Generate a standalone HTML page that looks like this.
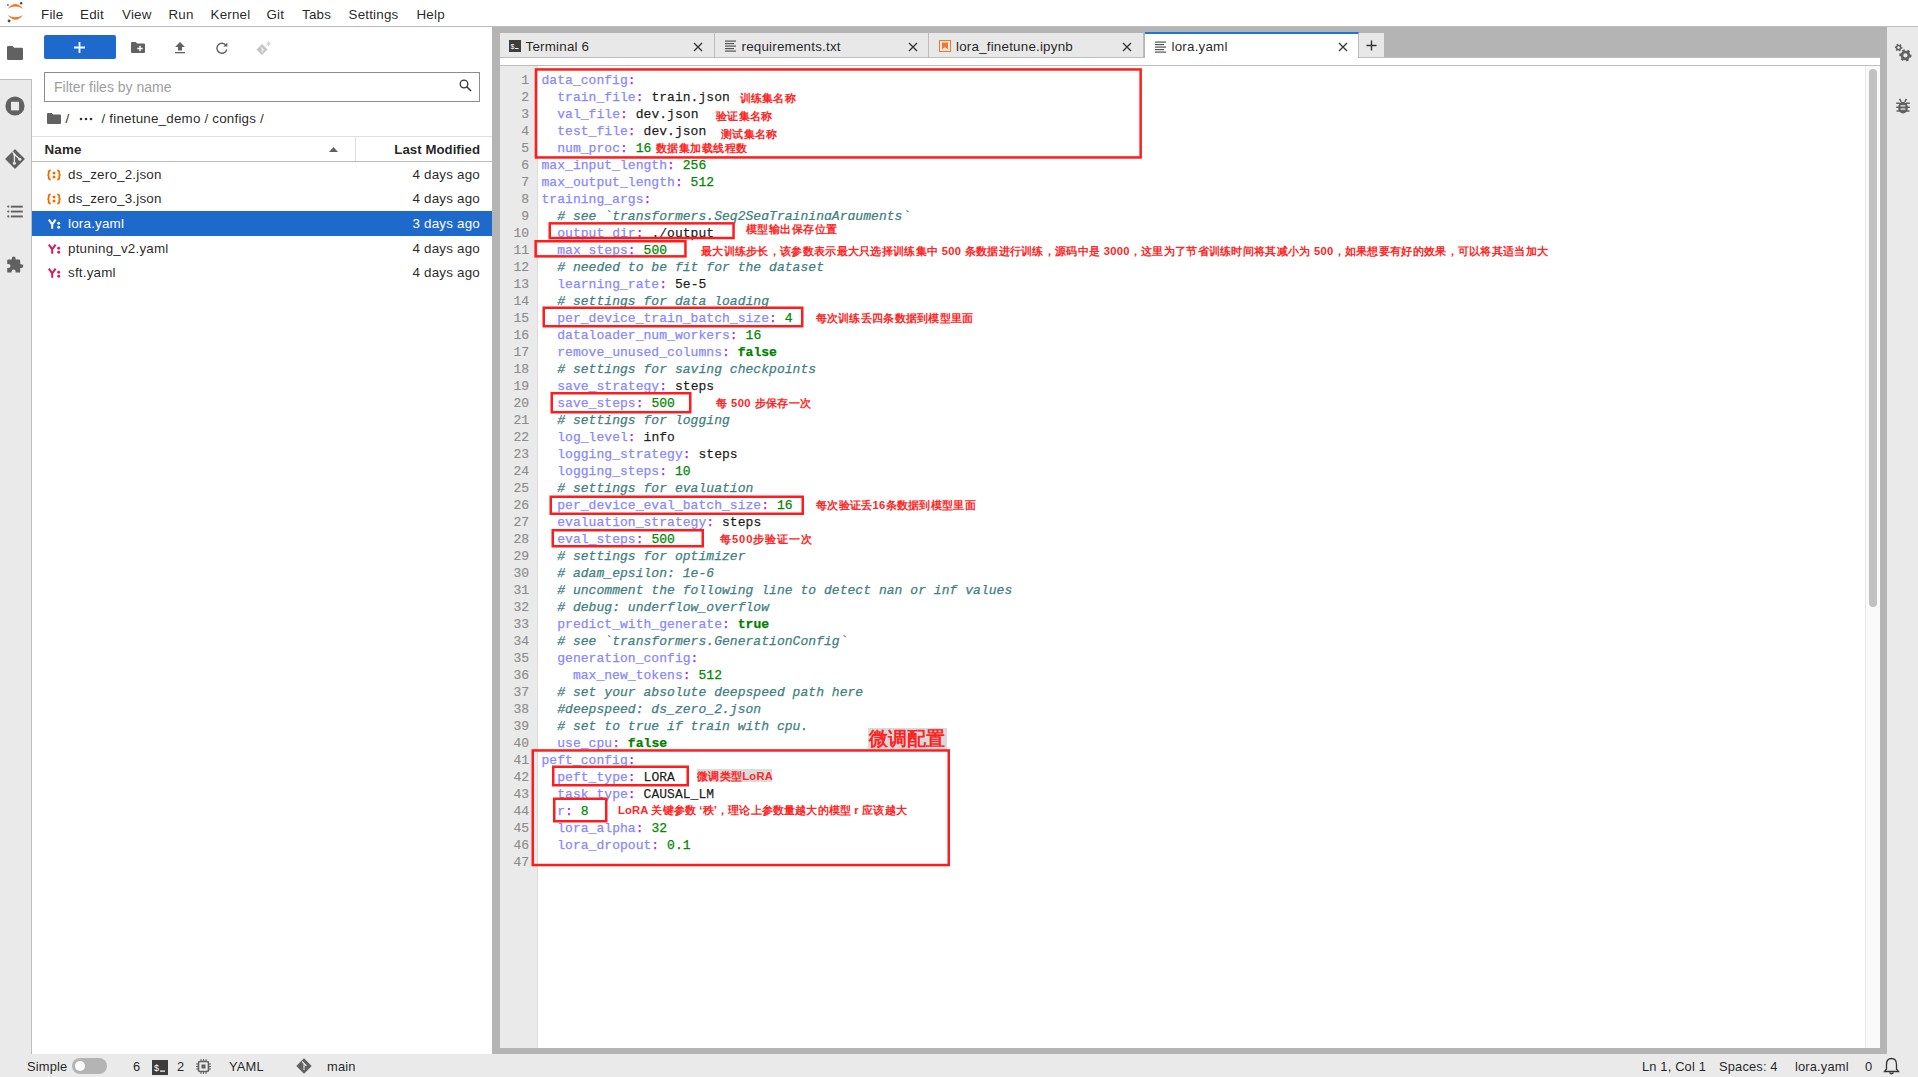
<!DOCTYPE html>
<html><head><meta charset="utf-8">
<style>
*{box-sizing:border-box}
html,body{margin:0;padding:0}
body{width:1918px;height:1077px;position:relative;overflow:hidden;background:#fff;font-family:"Liberation Sans",sans-serif;color:rgba(0,0,0,.87)}
.a{position:absolute}
.menu{position:absolute;top:5.5px;font-size:13.4px;letter-spacing:0.2px;line-height:18px;color:rgba(0,0,0,.87)}
.fr{position:absolute;left:32px;width:460px;height:24.6px}
.fr .nm{position:absolute;left:36px;top:1px;font-size:13.4px;letter-spacing:0.2px;line-height:24.6px;color:rgba(0,0,0,.87)}
.fr .dt{position:absolute;right:12px;top:1px;font-size:13.4px;letter-spacing:0.2px;line-height:24.6px;color:rgba(0,0,0,.87)}
.fr svg{position:absolute;left:15px;top:6px}
.tab{position:absolute;top:33px;height:24.5px;width:214.5px;background:#e8e8e8;border-right:1px solid #bdbdbd}
.tab .t{position:absolute;left:25.5px;top:2px;line-height:24.5px;font-size:13.4px;letter-spacing:0.2px;color:rgba(0,0,0,.87)}
.tab .x{position:absolute;left:193px;top:8.5px}
.ln{position:absolute;left:500px;width:29px;text-align:right;font-family:"Liberation Mono",monospace;font-size:13px;line-height:17px;color:#8c8c8c;height:17px;-webkit-text-stroke:0.15px}
.cl{position:absolute;left:541.5px;font-family:"Liberation Mono",monospace;font-size:13px;line-height:17px;white-space:pre;color:rgba(0,0,0,.87);height:17px;letter-spacing:0.045px;-webkit-text-stroke:0.25px}
.k{color:#88f} .o{color:#a2f} .n{color:#080} .b{color:#008000;font-weight:bold} .c{color:#408080;font-style:italic} .v{color:rgba(0,0,0,.87)}
.bx{position:absolute;border:2px solid #ff1c1c}
.lb{position:absolute;font-size:11.2px;letter-spacing:0.3px;line-height:16px;color:#ff2626;white-space:pre;font-weight:bold}
.st{position:absolute;top:1055px;font-size:12.9px;letter-spacing:0.15px;line-height:23px;color:rgba(0,0,0,.87)}
</style></head><body>

<!-- menubar -->
<div class="a" style="left:0;top:0;width:1918px;height:27px;background:#fff;border-bottom:1px solid #bdbdbd"></div>
<svg class="a" style="left:0;top:0" width="30" height="26" viewBox="0 0 30 26">
 <path d="M7.8 8.7 Q15.4 -0.6 23 8.7 Q15.4 4.3 7.8 8.7Z" fill="#f37726"/>
 <path d="M7.8 15 Q15.4 24.6 23 15 Q15.4 19.4 7.8 15Z" fill="#f37726"/>
 <circle cx="21.1" cy="3.3" r="1.25" fill="#4e4e4e"/>
 <circle cx="7.9" cy="5" r="0.95" fill="#767676"/>
 <circle cx="9.1" cy="21" r="1.45" fill="#4e4e4e"/>
</svg>
<div class="menu" style="left:41px">File</div>
<div class="menu" style="left:80px">Edit</div>
<div class="menu" style="left:122px">View</div>
<div class="menu" style="left:168.5px">Run</div>
<div class="menu" style="left:210.5px">Kernel</div>
<div class="menu" style="left:266.5px">Git</div>
<div class="menu" style="left:302px">Tabs</div>
<div class="menu" style="left:348.5px">Settings</div>
<div class="menu" style="left:416.5px">Help</div>

<!-- left sidebar -->
<div class="a" style="left:0;top:27px;width:32px;height:1027px;background:#eaeaea;border-right:1px solid #bdbdbd"></div>
<div class="a" style="left:0;top:27px;width:32px;height:52.5px;background:#fff"></div>
<div class="a" style="left:31px;top:79px;width:1px;height:1px;background:#bdbdbd"></div>
<div class="a" style="left:0;top:79px;width:32px;height:1px;background:#bdbdbd"></div>
<!-- folder icon -->
<svg class="a" style="left:7px;top:46px" width="16" height="14" viewBox="0 0 16 14"><path d="M0 1.2 Q0 0 1.2 0 H5.5 L7.2 1.8 H14.8 Q16 1.8 16 3 V12.8 Q16 14 14.8 14 H1.2 Q0 14 0 12.8Z" fill="#616161"/></svg>
<!-- stop circle -->
<svg class="a" style="left:5px;top:96px" width="20" height="20" viewBox="0 0 20 20"><circle cx="10" cy="10" r="9.6" fill="#616161"/><rect x="6" y="5.8" width="8" height="8.6" fill="#eaeaea"/></svg>
<!-- git diamond -->
<svg class="a" style="left:5px;top:149px" width="20" height="20" viewBox="0 0 20 20"><path d="M10 1 L19 10 L10 19 L1 10Z" fill="#616161" stroke="#616161" stroke-width="1.4" stroke-linejoin="round"/><path d="M7.6 2.6 L9.4 5.4 V14 M9.4 5.4 L14.6 10" stroke="#eaeaea" stroke-width="1.3" fill="none"/><circle cx="9.4" cy="14.3" r="1.5" fill="#eaeaea"/><circle cx="14.8" cy="10.2" r="1.5" fill="#eaeaea"/><circle cx="9.4" cy="5.6" r="1.2" fill="#eaeaea"/></svg>
<!-- list icon -->
<svg class="a" style="left:7px;top:205px" width="16" height="14" viewBox="0 0 16 14"><g fill="#616161"><circle cx="1.3" cy="1.6" r="1.1"/><circle cx="1.3" cy="6.5" r="1.1"/><circle cx="1.3" cy="11.4" r="1.1"/><rect x="3.8" y="0.7" width="12" height="1.9"/><rect x="3.8" y="5.6" width="12" height="1.9"/><rect x="3.8" y="10.5" width="12" height="1.9"/></g></svg>
<!-- puzzle -->
<svg class="a" style="left:6px;top:256px" width="18" height="18" viewBox="0 0 18 18"><path d="M15.4 8.2 H14.2 V4.8 Q14.2 3.6 13 3.6 H9.6 V2.4 Q9.6 0.5 7.7 0.5 Q5.8 0.5 5.8 2.4 V3.6 H2.4 Q1.2 3.6 1.2 4.8 V8 H2.4 Q4.5 8 4.5 10 Q4.5 12 2.4 12 H1.2 V15.4 Q1.2 16.6 2.4 16.6 H5.6 V15.4 Q5.6 13.4 7.6 13.4 Q9.6 13.4 9.6 15.4 V16.6 H13 Q14.2 16.6 14.2 15.4 V12 H15.4 Q17.3 12 17.3 10.1 Q17.3 8.2 15.4 8.2Z" fill="#616161"/></svg>

<!-- file browser -->
<div class="a" style="left:44px;top:35px;width:72px;height:24px;background:#1e69cc;border-radius:2px"></div>
<svg class="a" style="left:73px;top:40.5px" width="13" height="13" viewBox="0 0 13 13"><path d="M6.5 1 V12 M1 6.5 H12" stroke="#fff" stroke-width="1.8"/></svg>
<!-- new folder -->
<svg class="a" style="left:131px;top:42px" width="14" height="11" viewBox="0 0 14 11"><path d="M0 1 Q0 0 1 0 H4.8 L6.2 1.4 H13 Q14 1.4 14 2.4 V10 Q14 11 13 11 H1 Q0 11 0 10Z" fill="#616161"/><path d="M9 3.8 V9.2 M6.3 6.5 H11.7" stroke="#fff" stroke-width="1.4"/></svg>
<!-- upload -->
<svg class="a" style="left:175px;top:42px" width="10" height="12" viewBox="0 0 10 12"><path d="M5 0 L10 5 H7 V8.5 H3 V5 H0Z" fill="#616161"/><rect x="0" y="10" width="10" height="1.3" fill="#616161"/></svg>
<!-- refresh -->
<svg class="a" style="left:216px;top:42px" width="12" height="12" viewBox="0 0 12 12"><path d="M10 3.3 A5 5 0 1 0 10.8 7.5" stroke="#616161" stroke-width="1.4" fill="none"/><path d="M11.4 0.6 V4.6 H7.4Z" fill="#616161"/></svg>
<!-- git clone -->
<svg class="a" style="left:255px;top:40px" width="17" height="17" viewBox="0 0 17 17"><path d="M7 4 L12.5 9.5 L7 15 L1.5 9.5Z" fill="#c4c4c4"/><path d="M5.6 7 L7.2 8.6 V12.5 M7.2 8.6 L9 10.4" stroke="#fff" stroke-width="0.9" fill="none"/><path d="M13.5 1.5 V6 M11.3 3.8 H15.7 M12 2.3 L15 5.3 M15 2.3 L12 5.3" stroke="#d0d0d0" stroke-width="0.9"/></svg>
<!-- filter -->
<div class="a" style="left:44px;top:72px;width:436px;height:29.5px;border:1px solid #8c8c8c;background:#fff"></div>
<div class="a" style="left:54px;top:78px;font-size:14px;line-height:18px;color:#9e9e9e">Filter files by name</div>
<svg class="a" style="left:459px;top:79px" width="13" height="13" viewBox="0 0 13 13"><circle cx="5" cy="5" r="3.8" stroke="#333" stroke-width="1.3" fill="none"/><path d="M7.8 7.8 L12 12" stroke="#333" stroke-width="1.5"/></svg>
<!-- breadcrumbs -->
<svg class="a" style="left:47px;top:113px" width="14" height="11" viewBox="0 0 14 11"><path d="M0 1 Q0 0 1 0 H4.8 L6.2 1.4 H13 Q14 1.4 14 2.4 V10 Q14 11 13 11 H1 Q0 11 0 10Z" fill="#616161"/></svg>
<div class="a" style="left:65.5px;top:110px;font-size:13.4px;letter-spacing:0.2px;line-height:17px;color:rgba(0,0,0,.87);white-space:pre">/ </div>
<svg class="a" style="left:79px;top:117px" width="14" height="4" viewBox="0 0 14 4"><circle cx="2" cy="2" r="1.3" fill="#333"/><circle cx="7" cy="2" r="1.3" fill="#333"/><circle cx="12" cy="2" r="1.3" fill="#333"/></svg>
<div class="a" style="left:101.5px;top:110px;font-size:13.4px;letter-spacing:0.2px;line-height:17px;color:rgba(0,0,0,.87);white-space:pre">/ finetune_demo / configs / </div>
<!-- listing header -->
<div class="a" style="left:32px;top:136px;width:460px;height:1px;background:#e0e0e0"></div>
<div class="a" style="left:32px;top:161px;width:460px;height:1px;background:#bdbdbd"></div>
<div class="a" style="left:355px;top:137px;width:1px;height:24px;background:#e0e0e0"></div>
<div class="a" style="left:44.5px;top:141px;font-size:13.4px;letter-spacing:0.2px;line-height:17px;font-weight:bold;color:rgba(0,0,0,.87)">Name</div>
<svg class="a" style="left:329px;top:146.5px" width="9" height="5" viewBox="0 0 9 5"><path d="M0 5 L4.5 0 L9 5Z" fill="#616161"/></svg>
<div class="a" style="left:300px;width:180px;text-align:right;top:141px;font-size:13.2px;letter-spacing:0.05px;line-height:17px;font-weight:bold;color:rgba(0,0,0,.87)">Last Modified</div>

<div class="fr" style="top:161.5px;"><svg width="20" height="20" viewBox="0 0 20 20" style="left:12px;top:3px"><path d="M6.8 5.3 Q4.7 5.3 4.7 7.4 V8.9 Q4.7 9.9 3.4 9.9 Q4.7 9.9 4.7 10.9 V12.6 Q4.7 14.7 6.8 14.7 M13.2 5.3 Q15.3 5.3 15.3 7.4 V8.9 Q15.3 9.9 16.6 9.9 Q15.3 9.9 15.3 10.9 V12.6 Q15.3 14.7 13.2 14.7" stroke="#ef6c00" stroke-width="1.8" fill="none"/><circle cx="10" cy="8.1" r="1.5" fill="#ef6c00"/><circle cx="10" cy="12.1" r="1.5" fill="#ef6c00"/></svg><div class="nm" style="">ds_zero_2.json</div><div class="dt" style="">4 days ago</div></div>
<div class="fr" style="top:186.2px;"><svg width="20" height="20" viewBox="0 0 20 20" style="left:12px;top:3px"><path d="M6.8 5.3 Q4.7 5.3 4.7 7.4 V8.9 Q4.7 9.9 3.4 9.9 Q4.7 9.9 4.7 10.9 V12.6 Q4.7 14.7 6.8 14.7 M13.2 5.3 Q15.3 5.3 15.3 7.4 V8.9 Q15.3 9.9 16.6 9.9 Q15.3 9.9 15.3 10.9 V12.6 Q15.3 14.7 13.2 14.7" stroke="#ef6c00" stroke-width="1.8" fill="none"/><circle cx="10" cy="8.1" r="1.5" fill="#ef6c00"/><circle cx="10" cy="12.1" r="1.5" fill="#ef6c00"/></svg><div class="nm" style="">ds_zero_3.json</div><div class="dt" style="">4 days ago</div></div>
<div class="fr" style="top:211px;background:#1e69cc;"><svg width="20" height="20" viewBox="0 0 20 20" style="left:12px;top:3px"><path d="M4.8 5.6 L8.2 10.4 L11.6 5.6 M8.2 10.4 V14.8" stroke="#fff" stroke-width="2" fill="none" stroke-linejoin="round"/><circle cx="14.7" cy="9.3" r="1.45" fill="#fff"/><circle cx="14.7" cy="13.2" r="1.45" fill="#fff"/></svg><div class="nm" style="color:#fff;">lora.yaml</div><div class="dt" style="color:#fff;">3 days ago</div></div>
<div class="fr" style="top:235.7px;"><svg width="20" height="20" viewBox="0 0 20 20" style="left:12px;top:3px"><path d="M4.8 5.6 L8.2 10.4 L11.6 5.6 M8.2 10.4 V14.8" stroke="#d81b60" stroke-width="2" fill="none" stroke-linejoin="round"/><circle cx="14.7" cy="9.3" r="1.45" fill="#d81b60"/><circle cx="14.7" cy="13.2" r="1.45" fill="#d81b60"/></svg><div class="nm" style="">ptuning_v2.yaml</div><div class="dt" style="">4 days ago</div></div>
<div class="fr" style="top:260.4px;"><svg width="20" height="20" viewBox="0 0 20 20" style="left:12px;top:3px"><path d="M4.8 5.6 L8.2 10.4 L11.6 5.6 M8.2 10.4 V14.8" stroke="#d81b60" stroke-width="2" fill="none" stroke-linejoin="round"/><circle cx="14.7" cy="9.3" r="1.45" fill="#d81b60"/><circle cx="14.7" cy="13.2" r="1.45" fill="#d81b60"/></svg><div class="nm" style="">sft.yaml</div><div class="dt" style="">4 days ago</div></div>


<!-- main grey area -->
<div class="a" style="left:492px;top:27px;width:1395px;height:1027px;background:#b4b4b4"></div>
<!-- right sidebar -->
<div class="a" style="left:1887px;top:27px;width:31px;height:1027px;background:#eaeaea"></div>

<!-- tabs -->
<div class="tab" style="left:500px"><svg class="a" style="left:9px;top:7px" width="12" height="12" viewBox="0 0 12 12"><rect width="12" height="12" fill="#3d3d3d"/><text x="1.5" y="8.5" font-size="7" fill="#fff" font-family="Liberation Sans">$</text><rect x="6" y="8" width="3.5" height="1" fill="#fff"/></svg><div class="t">Terminal 6</div><svg class="x" width="10" height="10" viewBox="0 0 10 10"><path d="M1 1 L9 9 M9 1 L1 9" stroke="#333" stroke-width="1.3"/></svg></div>
<div class="tab" style="left:714.5px"><svg class="a" style="left:10px;top:7px" width="12" height="12" viewBox="0 0 12 12"><g fill="#555"><rect x="0" y="0.5" width="11" height="1.2"/><rect x="0" y="3" width="9" height="1.2"/><rect x="0" y="5.5" width="11" height="1.2"/><rect x="0" y="8" width="9" height="1.2"/><rect x="0" y="10.5" width="11" height="1.2"/></g></svg><div class="t" style="left:27px">requirements.txt</div><svg class="x" width="10" height="10" viewBox="0 0 10 10"><path d="M1 1 L9 9 M9 1 L1 9" stroke="#333" stroke-width="1.3"/></svg></div>
<div class="tab" style="left:929px"><svg class="a" style="left:9.5px;top:6.5px" width="12" height="12" viewBox="0 0 12 12"><rect x="0.5" y="0.5" width="11" height="11" fill="none" stroke="#f37726" stroke-width="1"/><path d="M3 2.5 H9 V9.5 L6 7 L3 9.5Z" fill="#f37726"/></svg><div class="t" style="left:27px">lora_finetune.ipynb</div><svg class="x" width="10" height="10" viewBox="0 0 10 10"><path d="M1 1 L9 9 M9 1 L1 9" stroke="#333" stroke-width="1.3"/></svg></div>
<div class="tab" style="left:1144.5px;background:#fff;top:32px;height:26px;border-top:2px solid #1976d2"><svg class="a" style="left:10px;top:7px" width="12" height="12" viewBox="0 0 12 12"><g fill="#555"><rect x="0" y="0.5" width="11" height="1.2"/><rect x="0" y="3" width="9" height="1.2"/><rect x="0" y="5.5" width="11" height="1.2"/><rect x="0" y="8" width="9" height="1.2"/><rect x="0" y="10.5" width="11" height="1.2"/></g></svg><div class="t" style="left:27px;top:1px;line-height:24px">lora.yaml</div><svg class="x" style="top:7.5px" width="10" height="10" viewBox="0 0 10 10"><path d="M1 1 L9 9 M9 1 L1 9" stroke="#333" stroke-width="1.3"/></svg></div>
<div class="a" style="left:1359px;top:33px;width:25px;height:24.5px;background:#e8e8e8"></div>
<svg class="a" style="left:1366px;top:40px" width="11" height="11" viewBox="0 0 11 11"><path d="M5.5 0.5 V10.5 M0.5 5.5 H10.5" stroke="#333" stroke-width="1.4"/></svg>
<div class="a" style="left:500px;top:57px;width:644.5px;height:1px;background:#bdbdbd"></div>
<div class="a" style="left:1359px;top:57px;width:521px;height:1px;background:#bdbdbd"></div>

<!-- editor -->
<div class="a" style="left:500px;top:58px;width:1380px;height:989.5px;background:#fff"></div>
<div class="a" style="left:500px;top:65px;width:1380px;height:1px;background:#bdbdbd"></div>
<div class="a" style="left:500px;top:66px;width:38px;height:981.5px;background:#eaeaea;border-right:1px solid #dcdcdc"></div>
<div class="a" style="left:1865px;top:66px;width:15px;height:981.5px;background:#fafafa;border-left:1px solid #e8e8e8"></div>
<div class="a" style="left:1869px;top:69px;width:8px;height:538px;background:#c1c1c1;border-radius:4px"></div>

<div class="ln" style="top:72px">1</div><div class="cl" style="top:72px"><span class="k">data_config</span><span class="o">:</span></div>
<div class="ln" style="top:89px">2</div><div class="cl" style="top:89px">  <span class="k">train_file</span><span class="o">:</span> <span class="v">train.json</span></div>
<div class="ln" style="top:106px">3</div><div class="cl" style="top:106px">  <span class="k">val_file</span><span class="o">:</span> <span class="v">dev.json</span></div>
<div class="ln" style="top:123px">4</div><div class="cl" style="top:123px">  <span class="k">test_file</span><span class="o">:</span> <span class="v">dev.json</span></div>
<div class="ln" style="top:140px">5</div><div class="cl" style="top:140px">  <span class="k">num_proc</span><span class="o">:</span> <span class="n">16</span></div>
<div class="ln" style="top:157px">6</div><div class="cl" style="top:157px"><span class="k">max_input_length</span><span class="o">:</span> <span class="n">256</span></div>
<div class="ln" style="top:174px">7</div><div class="cl" style="top:174px"><span class="k">max_output_length</span><span class="o">:</span> <span class="n">512</span></div>
<div class="ln" style="top:191px">8</div><div class="cl" style="top:191px"><span class="k">training_args</span><span class="o">:</span></div>
<div class="ln" style="top:208px">9</div><div class="cl" style="top:208px">  <i class="c"># see `transformers.Seq2SeqTrainingArguments`</i></div>
<div class="ln" style="top:225px">10</div><div class="cl" style="top:225px">  <span class="k">output_dir</span><span class="o">:</span> <span class="v">./output</span></div>
<div class="ln" style="top:242px">11</div><div class="cl" style="top:242px">  <span class="k">max_steps</span><span class="o">:</span> <span class="n">500</span></div>
<div class="ln" style="top:259px">12</div><div class="cl" style="top:259px">  <i class="c"># needed to be fit for the dataset</i></div>
<div class="ln" style="top:276px">13</div><div class="cl" style="top:276px">  <span class="k">learning_rate</span><span class="o">:</span> <span class="v">5e-5</span></div>
<div class="ln" style="top:293px">14</div><div class="cl" style="top:293px">  <i class="c"># settings for data loading</i></div>
<div class="ln" style="top:310px">15</div><div class="cl" style="top:310px">  <span class="k">per_device_train_batch_size</span><span class="o">:</span> <span class="n">4</span></div>
<div class="ln" style="top:327px">16</div><div class="cl" style="top:327px">  <span class="k">dataloader_num_workers</span><span class="o">:</span> <span class="n">16</span></div>
<div class="ln" style="top:344px">17</div><div class="cl" style="top:344px">  <span class="k">remove_unused_columns</span><span class="o">:</span> <b class="b">false</b></div>
<div class="ln" style="top:361px">18</div><div class="cl" style="top:361px">  <i class="c"># settings for saving checkpoints</i></div>
<div class="ln" style="top:378px">19</div><div class="cl" style="top:378px">  <span class="k">save_strategy</span><span class="o">:</span> <span class="v">steps</span></div>
<div class="ln" style="top:395px">20</div><div class="cl" style="top:395px">  <span class="k">save_steps</span><span class="o">:</span> <span class="n">500</span></div>
<div class="ln" style="top:412px">21</div><div class="cl" style="top:412px">  <i class="c"># settings for logging</i></div>
<div class="ln" style="top:429px">22</div><div class="cl" style="top:429px">  <span class="k">log_level</span><span class="o">:</span> <span class="v">info</span></div>
<div class="ln" style="top:446px">23</div><div class="cl" style="top:446px">  <span class="k">logging_strategy</span><span class="o">:</span> <span class="v">steps</span></div>
<div class="ln" style="top:463px">24</div><div class="cl" style="top:463px">  <span class="k">logging_steps</span><span class="o">:</span> <span class="n">10</span></div>
<div class="ln" style="top:480px">25</div><div class="cl" style="top:480px">  <i class="c"># settings for evaluation</i></div>
<div class="ln" style="top:497px">26</div><div class="cl" style="top:497px">  <span class="k">per_device_eval_batch_size</span><span class="o">:</span> <span class="n">16</span></div>
<div class="ln" style="top:514px">27</div><div class="cl" style="top:514px">  <span class="k">evaluation_strategy</span><span class="o">:</span> <span class="v">steps</span></div>
<div class="ln" style="top:531px">28</div><div class="cl" style="top:531px">  <span class="k">eval_steps</span><span class="o">:</span> <span class="n">500</span></div>
<div class="ln" style="top:548px">29</div><div class="cl" style="top:548px">  <i class="c"># settings for optimizer</i></div>
<div class="ln" style="top:565px">30</div><div class="cl" style="top:565px">  <i class="c"># adam_epsilon: 1e-6</i></div>
<div class="ln" style="top:582px">31</div><div class="cl" style="top:582px">  <i class="c"># uncomment the following line to detect nan or inf values</i></div>
<div class="ln" style="top:599px">32</div><div class="cl" style="top:599px">  <i class="c"># debug: underflow_overflow</i></div>
<div class="ln" style="top:616px">33</div><div class="cl" style="top:616px">  <span class="k">predict_with_generate</span><span class="o">:</span> <b class="b">true</b></div>
<div class="ln" style="top:633px">34</div><div class="cl" style="top:633px">  <i class="c"># see `transformers.GenerationConfig`</i></div>
<div class="ln" style="top:650px">35</div><div class="cl" style="top:650px">  <span class="k">generation_config</span><span class="o">:</span></div>
<div class="ln" style="top:667px">36</div><div class="cl" style="top:667px">    <span class="k">max_new_tokens</span><span class="o">:</span> <span class="n">512</span></div>
<div class="ln" style="top:684px">37</div><div class="cl" style="top:684px">  <i class="c"># set your absolute deepspeed path here</i></div>
<div class="ln" style="top:701px">38</div><div class="cl" style="top:701px">  <i class="c">#deepspeed: ds_zero_2.json</i></div>
<div class="ln" style="top:718px">39</div><div class="cl" style="top:718px">  <i class="c"># set to true if train with cpu.</i></div>
<div class="ln" style="top:735px">40</div><div class="cl" style="top:735px">  <span class="k">use_cpu</span><span class="o">:</span> <b class="b">false</b></div>
<div class="ln" style="top:752px">41</div><div class="cl" style="top:752px"><span class="k">peft_config</span><span class="o">:</span></div>
<div class="ln" style="top:769px">42</div><div class="cl" style="top:769px">  <span class="k">peft_type</span><span class="o">:</span> <span class="v">LORA</span></div>
<div class="ln" style="top:786px">43</div><div class="cl" style="top:786px">  <span class="k">task_type</span><span class="o">:</span> <span class="v">CAUSAL_LM</span></div>
<div class="ln" style="top:803px">44</div><div class="cl" style="top:803px">  <span class="k">r</span><span class="o">:</span> <span class="n">8</span></div>
<div class="ln" style="top:820px">45</div><div class="cl" style="top:820px">  <span class="k">lora_alpha</span><span class="o">:</span> <span class="n">32</span></div>
<div class="ln" style="top:837px">46</div><div class="cl" style="top:837px">  <span class="k">lora_dropout</span><span class="o">:</span> <span class="n">0.1</span></div>
<div class="ln" style="top:854px">47</div><div class="cl" style="top:854px"></div>

<!-- annotations -->
<div class="a" style="left:868px;top:728px;width:78.5px;height:21px;background:#dadada"></div>
<div class="a" style="left:868.5px;top:727.5px;font-size:18.5px;letter-spacing:0.25px;line-height:22px;color:#ff2222;font-weight:bold">微调配置</div>
<div class="a" style="left:697px;top:769px;width:75px;height:13px;background:#dcdcdc"></div>
<div class="lb" style="left:697px;top:767.5px">微调类型LoRA</div>
<div class="a" style="left:737px;top:219.5px;width:175px;height:3px;background:#fff"></div>
<svg class="a" style="left:0;top:0" width="1918" height="1077" viewBox="0 0 1918 1077"><rect x="535.95" y="69.45" width="604.7" height="87.99999999999999" fill="none" stroke="#ff1c1c" stroke-width="2.5"/><rect x="549.75" y="223.35" width="183.79999999999995" height="14.700000000000017" fill="none" stroke="#ff1c1c" stroke-width="2.5"/><rect x="535.65" y="241.25" width="149.80000000000007" height="15.100000000000023" fill="none" stroke="#ff1c1c" stroke-width="2.5"/><rect x="543.75" y="307.75" width="258.5" height="18.5" fill="none" stroke="#ff1c1c" stroke-width="2.5"/><rect x="551.75" y="393.25" width="138.5" height="19.0" fill="none" stroke="#ff1c1c" stroke-width="2.5"/><rect x="550.75" y="496.75" width="252.0" height="17.0" fill="none" stroke="#ff1c1c" stroke-width="2.5"/><rect x="552.75" y="530.25" width="150.0" height="16.0" fill="none" stroke="#ff1c1c" stroke-width="2.5"/><rect x="532.75" y="750.45" width="416.0" height="114.59999999999991" fill="none" stroke="#ff1c1c" stroke-width="2.5"/><rect x="553.25" y="766.75" width="134.5" height="18.5" fill="none" stroke="#ff1c1c" stroke-width="2.5"/><rect x="554.25" y="798.75" width="52.0" height="22.5" fill="none" stroke="#ff1c1c" stroke-width="2.5"/></svg>
<div class="lb" style="left:739.5px;top:89.5px;">训练集名称</div>
<div class="lb" style="left:716px;top:107.5px;">验证集名称</div>
<div class="lb" style="left:721px;top:125.5px;">测试集名称</div>
<div class="lb" style="left:656px;top:139.5px;letter-spacing:0.45px">数据集加载线程数</div>
<div class="lb" style="left:746px;top:220.5px;letter-spacing:0.42px">模型输出保存位置</div>
<div class="lb" style="left:701px;top:243px;">最大训练步长，该参数表示最大只选择训练集中 500 条数据进行训练，源码中是 3000，这里为了节省训练时间将其减小为 500，如果想要有好的效果，可以将其适当加大</div>
<div class="lb" style="left:815.5px;top:309.5px;">每次训练丢四条数据到模型里面</div>
<div class="lb" style="left:716px;top:395px;letter-spacing:0.45px">每 500 步保存一次</div>
<div class="lb" style="left:816px;top:497px;">每次验证丢16条数据到模型里面</div>
<div class="lb" style="left:720px;top:530.5px;letter-spacing:0.9px">每500步验证一次</div>
<div class="lb" style="left:618px;top:802px;letter-spacing:0.17px">LoRA 关键参数 ‘秩’，理论上参数量越大的模型 r 应该越大</div>

<!-- right sidebar icons -->
<svg class="a" style="left:1887px;top:36px" width="31" height="90" viewBox="1887 36 31 90">
<path d="M1902.37 47.10 L1902.37 48.10 L1902.37 48.10 L1902.11 49.05 L1901.28 48.71 L1900.90 49.37 L1900.90 49.37 L1900.37 49.90 L1900.91 50.61 L1900.05 51.11 L1900.05 51.11 L1899.10 51.37 L1898.98 50.48 L1898.22 50.48 L1898.22 50.48 L1897.49 50.28 L1897.15 51.11 L1896.29 50.61 L1896.29 50.61 L1895.59 49.91 L1896.30 49.37 L1895.92 48.71 L1895.92 48.71 L1895.72 47.98 L1894.83 48.10 L1894.83 47.10 L1894.83 47.10 L1895.09 46.15 L1895.92 46.49 L1896.30 45.83 L1896.30 45.83 L1896.83 45.30 L1896.29 44.59 L1897.15 44.09 L1897.15 44.09 L1898.10 43.83 L1898.22 44.72 L1898.98 44.72 L1898.98 44.72 L1899.71 44.92 L1900.05 44.09 L1900.91 44.59 L1900.91 44.59 L1901.61 45.29 L1900.90 45.83 L1901.28 46.49 L1901.28 46.49 L1901.48 47.22Z" fill="#616161"/><circle cx="1898.6" cy="47.6" r="1.3" fill="#eaeaea"/>
<path d="M1911.45 54.60 L1911.45 56.20 L1911.45 56.20 L1911.04 57.73 L1909.83 57.24 L1909.21 58.32 L1909.21 58.32 L1908.32 59.21 L1909.11 60.24 L1907.73 61.04 L1907.73 61.04 L1906.20 61.45 L1906.03 60.16 L1904.77 60.16 L1904.77 60.16 L1903.56 59.83 L1903.07 61.04 L1901.69 60.24 L1901.69 60.24 L1900.56 59.11 L1901.59 58.32 L1900.97 57.24 L1900.97 57.24 L1900.64 56.03 L1899.35 56.20 L1899.35 54.60 L1899.35 54.60 L1899.76 53.07 L1900.97 53.56 L1901.59 52.48 L1901.59 52.48 L1902.48 51.59 L1901.69 50.56 L1903.07 49.76 L1903.07 49.76 L1904.60 49.35 L1904.77 50.64 L1906.03 50.64 L1906.03 50.64 L1907.24 50.97 L1907.73 49.76 L1909.11 50.56 L1909.11 50.56 L1910.24 51.69 L1909.21 52.48 L1909.83 53.56 L1909.83 53.56 L1910.16 54.77Z" fill="#616161"/><circle cx="1905.4" cy="55.4" r="2.1" fill="#eaeaea"/>
<ellipse cx="1903" cy="107.6" rx="4.9" ry="5.9" fill="#616161"/>
<path d="M1899.6 98.8 L1901.2 101.8 M1906.4 98.8 L1904.8 101.8" stroke="#616161" stroke-width="1.6"/>
<path d="M1896.2 103.2 H1900 M1906 103.2 H1909.8 M1896.2 107.2 H1900 M1906 107.2 H1909.8 M1896.5 110.9 H1900 M1906 110.9 H1909.5" stroke="#616161" stroke-width="1.5"/>
<rect x="1900.6" y="105.2" width="4.8" height="1.3" fill="#eaeaea"/><rect x="1900.6" y="108.4" width="4.8" height="1.3" fill="#eaeaea"/>
</svg>

<!-- status bar -->
<div class="a" style="left:0;top:1054px;width:1918px;height:23px;background:#eaeaea"></div>
<div class="st" style="left:27px">Simple</div>
<div class="a" style="left:72px;top:1058px;width:35px;height:15.5px;border-radius:8px;background:#b4b4b4"></div>
<div class="a" style="left:74.7px;top:1060.8px;width:10.2px;height:10.2px;border-radius:6px;background:#fff"></div>
<div class="st" style="left:133px">6</div>
<svg class="a" style="left:152px;top:1059.5px" width="16" height="15" viewBox="0 0 16 15"><rect width="16" height="15" fill="#3d3d3d"/><text x="2" y="11" font-size="9" fill="#fff" font-family="Liberation Sans">$</text><rect x="8" y="10.5" width="5" height="1.2" fill="#fff"/></svg>
<div class="st" style="left:177px">2</div>
<svg class="a" style="left:196px;top:1059px" width="15" height="15" viewBox="0 0 15 15"><rect x="2.5" y="2.5" width="10" height="10" rx="1.5" fill="none" stroke="#616161" stroke-width="1.6"/><rect x="5.5" y="5.5" width="4" height="4" fill="#616161"/><path d="M5 0 V2.5 M7.5 0 V2.5 M10 0 V2.5 M5 12.5 V15 M7.5 12.5 V15 M10 12.5 V15 M0 5 H2.5 M0 7.5 H2.5 M0 10 H2.5 M12.5 5 H15 M12.5 7.5 H15 M12.5 10 H15" stroke="#616161" stroke-width="1"/></svg>
<div class="st" style="left:229px">YAML</div>
<svg class="a" style="left:296px;top:1058px" width="16" height="16" viewBox="0 0 16 16"><path d="M8 0.3 L15.7 8 L8 15.7 L0.3 8Z" fill="#616161"/><path d="M6 3.5 L8 5.5 V12 M8 5.5 L10.5 8" stroke="#eaeaea" stroke-width="1.1" fill="none"/></svg>
<div class="st" style="left:327px">main</div>
<div class="st" style="left:1642px">Ln 1, Col 1</div>
<div class="st" style="left:1719px">Spaces: 4</div>
<div class="st" style="left:1795px">lora.yaml</div>
<div class="st" style="left:1865px">0</div>
<svg class="a" style="left:1883px;top:1057px" width="17" height="18" viewBox="0 0 17 18"><path d="M8.5 1.5 Q13.5 1.5 13.5 7.5 V12 L15.5 14.5 H1.5 L3.5 12 V7.5 Q3.5 1.5 8.5 1.5Z" fill="none" stroke="#333" stroke-width="1.3"/><path d="M6.5 15.5 Q8.5 18 10.5 15.5" fill="none" stroke="#333" stroke-width="1.3"/></svg>

</body></html>
